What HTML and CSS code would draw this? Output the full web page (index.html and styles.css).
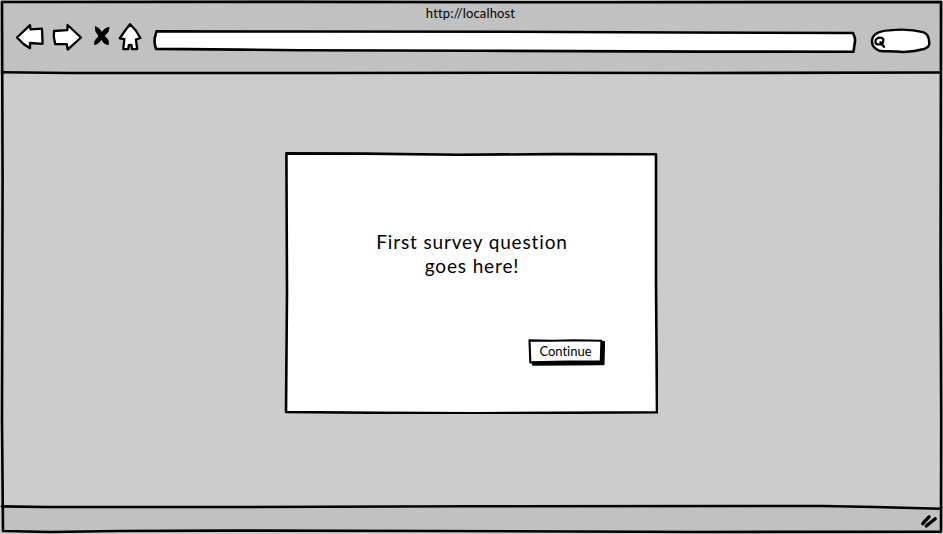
FILE: index.html
```html
<!DOCTYPE html>
<html lang="en">
<head>
<meta charset="utf-8">
<title>http://localhost</title>
<link rel="stylesheet" href="styles.css">
</head>
<body>
<div class="browser">
  <header class="chrome">
    <div class="title"><span class="url">http://localhost</span></div>
    <div class="toolbar">
      <svg class="nav" width="150" height="34" viewBox="0 20 150 34">
        <path d="M17 37.5L30 25.2L30.5 29.3L42 28.7L42.6 43.8L30 43L30 48.2L23.5 44Z"/>
        <path d="M54 31L67.3 30.2L67.6 25L81 37.5L67.7 49.6L66.8 44.2L55.2 44L53.8 37Z"/>
        <path class="solid" d="M95.6 26.9Q99.4 27.4 101.8 32.6Q104.8 27.4 109 27.4Q109.6 31.2 104.2 35.9Q109.3 39.6 108.3 44.6Q104 44.6 101.4 39.3Q98.7 44.2 94.7 44.6Q93.8 40.8 99 36Q94.4 31.2 95.6 26.9Z"/>
        <path d="M130 24.2L124.8 31L119.7 38.4L124.4 39.2L123.2 49L128.3 49.2L128.8 45.2L131.4 45L132 49.2L137.2 49L135.9 39.5L140.4 38L135.8 30.5Z"/>
      </svg>
      <svg class="address" width="706" height="26" viewBox="152 28 706 26">
        <path d="M156.5 31.3L300 31.5L510 31.8L680 32.5L853 33Q855.5 38 855 41L853.5 51.7L700 51.6L480 50.8L300 50.3L240 49.6L156 48.9Q154 43 154.8 38Z"/>
      </svg>
      <svg class="search" width="64" height="28" viewBox="868 26 64 28">
        <path d="M872 41.5C872 34 879 31 889 30.4C902 29 915 30 923 32.2Q929 34 929.2 42.5Q930 47 924 49Q915 51.4 904 52Q893 51 883 51.3C877 51 872 47 872 41.5Z"/>
        <path class="lens" d="M876.6 38.8Q880 36.6 883.2 38.8Q883.9 43.6 880.6 44.4Q876 45 875.4 42.2Q875.3 40 876.6 38.8ZM880.4 42.2L884 46.8"/>
      </svg>
    </div>
  </header>
  <main class="page">
    <section class="card">
      <svg class="outline" viewBox="0 0 374 262">
        <path d="M2.4 1.4L80 1.6L174 2.8L270 2.1L372 2.2L372 130L373 260.3L190 261.2L95 260.8L2 260L3 140Z"/>
      </svg>
      <p class="question">First survey question<br>goes here!</p>
      <button class="continue">
        <svg class="outline" viewBox="0 0 77 28">
          <path class="shadow" d="M4.5 24.5H73V4H76L75.5 26.2L5 26.8Z"/>
          <path d="M1.5 2.4L25 2.7L46 2.2L73.4 2.8L72.8 23.3L40 23.5L2.3 24.4Z"/>
        </svg>
        <span>Continue</span>
      </button>
    </section>
  </main>
  <footer class="status"></footer>
  <svg class="window-frame" viewBox="0 0 943 534">
    <path class="base" d="M2 506.4L45 507L250 507L470 506.3L823 506L875 507L941 508.8V532H2Z"/>
    <path d="M2 2L300 1.9L600 2.3L941 2L940.6 260L941.2 420L941 531.6L700 532L430 531L230 530.6L120 531L50 532L3 531L2 420L2.6 180Z"/>
    <path d="M2 72.2L70 73L330 73L520 72.8L700 73L940 72.5"/>
    <path d="M2 506.4L45 507L250 507L470 506.3L823 506L875 507L941 508.8"/>
    <path class="grip" d="M922.8 523.6L929 516.8M926.3 526L935.2 518.8"/>
  </svg>
</div>
</body>
</html>
```
FILE: styles.css
```css
* { box-sizing: border-box; }
body { margin: 0; font-family: Lato, "Liberation Sans", sans-serif; font-variant-ligatures: none; color: #000; }
.browser {
  position: relative;
  display: grid;
  grid-template-rows: 73px 1fr 28px;
  width: 943px;
  height: 534px;
  overflow: hidden;
  background: #ccc;
}
svg { display: block; fill: #fff; stroke: #000; stroke-width: 2.6; stroke-linejoin: round; stroke-linecap: round; }
.chrome { background: #c1c1c1; }
.title { height: 20px; padding: 5px 2px 0 0; text-align: center; font-size: 13px; line-height: 16px; }
.url { letter-spacing: 0.15px; }
.toolbar { display: flex; align-items: flex-start; }
.nav { stroke-width: 2.3; }
.nav .solid { fill: #000; stroke-width: 1; }
.address { margin: 8px 0 0 2px; }
.search { margin: 6px 0 0 10px; stroke-width: 2.4; }
.search .lens { fill: none; stroke-width: 2.2; }
.page { padding: 79px 0 0 284px; }
.card {
  position: relative;
  display: flex;
  flex-direction: column;
  width: 374px;
  height: 262px;
}
.outline { position: absolute; inset: 0; width: 100%; height: 100%; }
.question {
  position: relative;
  margin: 78px 0 0 2px;
  text-align: center;
  font-size: 19px;
  line-height: 24px;
  letter-spacing: 0.86px;
}
.continue {
  position: relative;
  align-self: flex-end;
  width: 77px;
  height: 28px;
  margin: 60px 53px 0 0;
  padding: 0 2px 3px 0;
  border: 0;
  background: none;
  font: 13px Lato, "Liberation Sans", sans-serif;
  font-variant-ligatures: none;
  letter-spacing: 0;
  color: #000;
}
.continue span { position: relative; }
.continue .outline { stroke-width: 2.1; }
.continue .shadow { fill: #000; }
.status { background: #ccc; }
.window-frame { position: absolute; inset: 0; width: 943px; height: 534px; fill: none; pointer-events: none; }
.window-frame .base { fill: #c1c1c1; stroke: none; }
.window-frame .grip { stroke-width: 3.4; }
```
